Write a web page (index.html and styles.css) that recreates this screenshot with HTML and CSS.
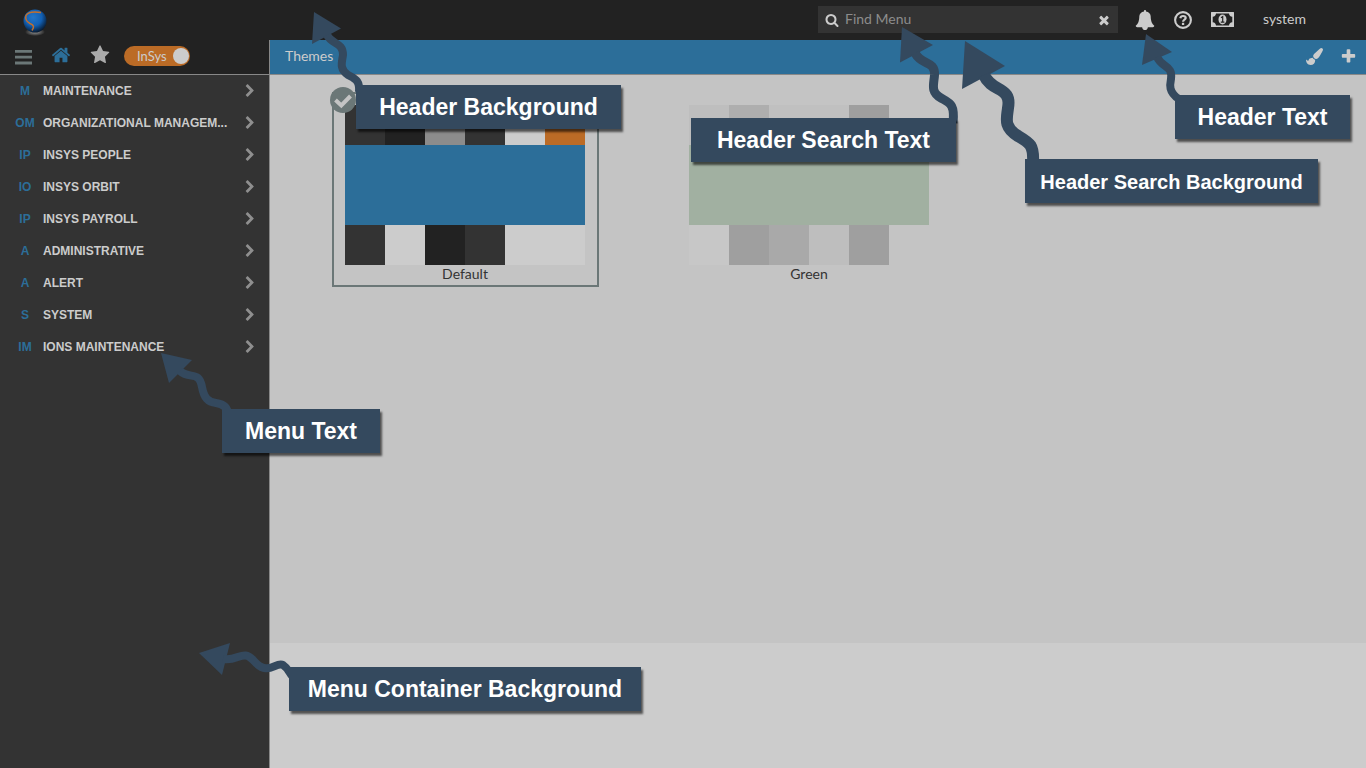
FILE: index.html
```html
<!DOCTYPE html>
<html lang="en">
<head>
<meta charset="utf-8">
<meta name="viewport" content="width=device-width, initial-scale=1">
<title>Themes</title>
<link rel="stylesheet" href="styles.css">
</head>
<body>
<svg class="defs" aria-hidden="true">
  <symbol id="chevron" viewBox="0 0 1792 1792"><path d="M1363 877l-742 742q-19 19-45 19t-45-19l-166-166q-19-19-19-45t19-45l531-531-531-531q-19-19-19-45t19-45l166-166q19-19 45-19t45 19l742 742q19 19 19 45t-19 45z"/></symbol>
</svg>
<div class="app">
  <header class="topbar">
    <a class="logo" href="#" aria-label="Home page">
      <svg width="26" height="28" viewBox="0 0 26 28">
        <defs>
          <radialGradient id="ball" cx="42%" cy="34%" r="68%">
            <stop offset="0" stop-color="#2476c8"/><stop offset=".55" stop-color="#1260b4"/><stop offset="1" stop-color="#08182c"/>
          </radialGradient>
          <radialGradient id="shade"><stop offset=".3" stop-color="#777"/><stop offset="1" stop-color="#222"/></radialGradient>
        </defs>
        <ellipse cx="13" cy="23" rx="10" ry="4" fill="url(#shade)"/>
        <circle cx="13" cy="12" r="11.500" fill="url(#ball)"/>
        <path d="M19 3.500C13 2.500 6 3 4 6.500C3 10.500 5 13 8 14.500C12 16 12.500 18 10 21.500" fill="none" stroke="#c4702c" stroke-width="1.500"/>
      </svg>
    </a>
    <form class="search" role="search">
      <svg class="search-icon" width="14" height="14" viewBox="0 0 1792 1792"><path d="M1216 832q0-185-131.500-316.500t-316.500-131.500-316.500 131.500-131.500 316.500 131.500 316.500 316.500 131.500 316.500-131.500 131.500-316.500zm512 832q0 52-38 90t-90 38q-54 0-90-38l-343-342q-179 124-399 124-143 0-273.500-55.500t-225-150-150-225-55.500-273.500 55.500-273.500 150-225 225-150 273.500-55.500 273.500 55.500 225 150 150 225 55.500 273.500q0 220-124 399l343 343q37 37 37 90z"/></svg>
      <input type="text" placeholder="Find Menu" aria-label="Find Menu">
      <button type="button" aria-label="Clear"><svg width="14" height="14" viewBox="0 0 1792 1792"><path d="M1490 1322q0 40-28 68l-136 136q-28 28-68 28t-68-28l-294-294-294 294q-28 28-68 28t-68-28l-136-136q-28-28-28-68t28-68l294-294-294-294q-28-28-28-68t28-68l136-136q28-28 68-28t68 28l294 294 294-294q28-28 68-28t68 28l136 136q28 28 28 68t-28 68l-294 294 294 294q28 28 28 68z"/></svg></button>
    </form>
    <nav class="actions" aria-label="Account">
      <button type="button" aria-label="Alerts"><svg width="20" height="20" viewBox="0 0 1792 1792"><path d="M1728 1408q0 52-38 90t-90 38h-448q0 106-75 181t-181 75-181-75-75-181h-448q-52 0-90-38t-38-90q50-42 91-88t85-119.500 74.500-158.500 50-206 19.500-260q0-152 117-282.500t307-158.500q-8-19-8-39 0-40 28-68t68-28 68 28 28 68q0 20-8 39 190 28 307 158.500t117 282.500q0 139 19.500 260t50 206 74.500 158.500 85 119.500 91 88z"/></svg></button>
      <button type="button" aria-label="Help"><svg width="18" height="18" viewBox="0 0 18 18"><circle cx="9" cy="9" r="7.900" fill="none" stroke="currentColor" stroke-width="2.100"/><path d="M6.300 7.200C6.600 5.600 7.700 5 9 5C10.500 5 11.700 5.900 11.700 7.100C11.700 8.700 9.100 8.700 9.100 10.700" fill="none" stroke="currentColor" stroke-width="2.200"/><path d="M7.900 11.800h2.300v2.200h-2.300z"/></svg></button>
      <button type="button" aria-label="Payments"><svg width="23" height="15" viewBox="0 0 23 15"><path fill-rule="evenodd" d="M.5 0h22q.5 0 .5.500v14q0 .5-.5.500h-22q-.5 0-.5-.5v-14q0-.5.500-.5zM5 1.600Q4.700 4.500 1.700 4.800V10.200Q4.700 10.500 5 13.400H18Q18.300 10.500 21.300 10.200V4.800Q18.300 4.500 18 1.600z"/><ellipse cx="11.500" cy="7.500" rx="4" ry="4.900"/><path d="M10 5.800L11.700 4.600V10M9.800 10.200H13.400" fill="none" stroke="#222" stroke-width="1.200"/></svg></button>
      <a class="user" href="#">system</a>
    </nav>
  </header>
  <div class="body">
    <aside class="sidebar">
      <div class="tools">
        <button type="button" class="bars" aria-label="Toggle menu"><svg width="18" height="15" viewBox="0 0 18 15"><path d="M1 0h17v2.800h-17zM1 5.800h17v2.800h-17zM1 11.600h17v2.800h-17z"/></svg></button>
        <button type="button" class="home" aria-label="Home"><svg width="20" height="20" viewBox="0 0 1792 1792"><path d="M1472 992v480q0 26-19 45t-45 19h-384v-384h-256v384h-384q-26 0-45-19t-19-45v-480q0-1 .5-3t.5-3l575-474 575 474q1 2 1 6zm223-69l-62 74q-8 9-21 11h-3q-13 0-21-7l-692-577-692 577q-12 8-24 7-13-2-21-11l-62-74q-8-10-7-23.500t11-21.500l719-599q32-26 76-26t76 26l244 204v-195q0-14 9-23t23-9h192q14 0 23 9t9 23v408l219 182q10 8 11 21.500t-7 23.500z"/></svg></button>
        <button type="button" class="star" aria-label="Favorites"><svg width="20" height="20" viewBox="0 0 1792 1792"><path d="M1728 647q0 22-26 48l-363 354 86 500q1 7 1 20 0 21-10.500 35.500t-30.500 14.500q-19 0-40-12l-449-236-449 236q-22 12-40 12-21 0-31.500-14.500t-10.500-35.500q0-6 2-20l86-500-364-354q-25-27-25-48 0-37 56-46l502-73 225-455q19-41 49-41t49 41l225 455 502 73q56 9 56 46z"/></svg></button>
        <label class="switch"><input type="checkbox" checked><span>InSys</span></label>
      </div>
      <ul class="menu">
        <li><a href="#"><b>M</b><span>MAINTENANCE</span><svg><use href="#chevron"/></svg></a></li>
        <li><a href="#"><b>OM</b><span>ORGANIZATIONAL MANAGEM...</span><svg><use href="#chevron"/></svg></a></li>
        <li><a href="#"><b>IP</b><span>INSYS PEOPLE</span><svg><use href="#chevron"/></svg></a></li>
        <li><a href="#"><b>IO</b><span>INSYS ORBIT</span><svg><use href="#chevron"/></svg></a></li>
        <li><a href="#"><b>IP</b><span>INSYS PAYROLL</span><svg><use href="#chevron"/></svg></a></li>
        <li><a href="#"><b>A</b><span>ADMINISTRATIVE</span><svg><use href="#chevron"/></svg></a></li>
        <li><a href="#"><b>A</b><span>ALERT</span><svg><use href="#chevron"/></svg></a></li>
        <li><a href="#"><b>S</b><span>SYSTEM</span><svg><use href="#chevron"/></svg></a></li>
        <li><a href="#"><b>IM</b><span>IONS MAINTENANCE</span><svg><use href="#chevron"/></svg></a></li>
      </ul>
    </aside>
    <main class="content">
      <div class="titlebar">
        <h1>Themes</h1>
        <button type="button" aria-label="Edit theme"><svg width="17" height="17" viewBox="0 0 1792 1792"><path d="M1615 0q70 0 122.500 46.500t52.500 116.500q0 63-45 151-332 629-465 752-97 91-218 91-126 0-216.500-92.500t-90.500-219.500q0-128 92-212l638-579q59-54 130-54zm-909 1034q39 76 106.500 130t150.500 76l1 71q4 213-129.500 347t-348.500 134q-123 0-218-46.500t-152.500-127.500-86.500-183-29-220q7 5 41 30t62 44.500 59 36.500 46 17q41 0 55-37 25-66 57.500-112.500t69.500-76 88-47.500 103-25.500 125-10.500z"/></svg></button>
        <button type="button" aria-label="Add theme"><svg width="17" height="17" viewBox="0 0 1792 1792"><path d="M1600 736v192q0 40-28 68t-68 28h-416v416q0 40-28 68t-68 28h-192q-40 0-68-28t-28-68v-416h-416q-40 0-68-28t-28-68v-192q0-40 28-68t68-28h416v-416q0-40 28-68t68-28h192q40 0 68 28t28 68v416h416q40 0 68 28t28 68z"/></svg></button>
      </div>
      <div class="themes">
        <figure class="theme selected">
          <svg class="check" width="26" height="26" viewBox="0 0 26 26"><circle cx="13" cy="13" r="13" fill="#6b7777"/><path d="M5.500 13L11.300 18.500L20.500 9" fill="none" stroke="#c4c4c4" stroke-width="4"/></svg>
          <div class="swatches">
            <i class="c33"></i><i class="c22"></i><i class="c8c"></i><i class="c33"></i><i class="ccc"></i><i class="orange"></i>
            <i class="wide blue"></i>
            <i class="c33"></i><i class="ccc"></i><i class="c22"></i><i class="c33"></i><i class="ccc"></i><i class="ccc"></i>
          </div>
          <figcaption>Default</figcaption>
        </figure>
        <figure class="theme">
          <div class="swatches">
            <i class="cbe"></i><i class="cae"></i><i class="cc0"></i><i class="cc0"></i><i class="c9f"></i><i></i>
            <i class="wide green"></i>
            <i class="cc7"></i><i class="c9f"></i><i class="ca9"></i><i class="cbe"></i><i class="c9f"></i><i></i>
          </div>
          <figcaption>Green</figcaption>
        </figure>
      </div>
    </main>
  </div>
  <div class="notes">
    <svg class="arrows" width="1366" height="768" viewBox="0 0 1366 768" aria-hidden="true">
      <g class="heads">
        <path d="M314 12L341 28.500L312 44z"/>
        <path d="M902 27L933 45L900 62.500z"/>
        <path d="M965 41L1005 66L962 89z"/>
        <path d="M1146 34L1172 52L1142 65z"/>
        <path d="M161 353L192 360L169 383z"/>
        <path d="M199 653L230 643L222 675z"/>
      </g>
      <g class="tails">
        <path stroke-width="8" d="M327 35C332 45 343 42 343 55C342 62 339 69 348 75C355 79 360 80 359 92"/>
        <path stroke-width="9" d="M915 53C922 66 935 60 934.500 75C934 84 930 92 941 98C950 103 955 104 953 123"/>
        <path stroke-width="12" d="M984 75C992 93 1012 86 1008 108C1007 118 1003 127 1018 136C1030 143 1034 145 1033 163"/>
        <path stroke-width="8" d="M1157 57C1162 68 1173 65 1171 79C1170 84 1168 92 1179 99"/>
        <path stroke-width="8" d="M180 371C190 380 199 370 202 387C204 398 208 402 216 403C223 404 228 407 228 415"/>
        <path stroke-width="8" d="M223 659C238 662 243 648 254 661C268 677 276 661 283 665C289 669 289 673 293 677"/>
      </g>
    </svg>
    <div class="note n1">Header Background</div>
    <div class="note n2">Header Search Text</div>
    <div class="note n3">Header Text</div>
    <div class="note small n4">Header Search Background</div>
    <div class="note n5">Menu Text</div>
    <div class="note n6">Menu Container Background</div>
  </div>
</div>
</body>
</html>
```
FILE: styles.css
```css
* { box-sizing: border-box; }
body {
  margin: 0;
  font: 14px/20px Lato, "Open Sans", sans-serif;
  color: #333;
  background: #ccc;
}
svg { display: block; fill: currentColor; }
button {
  padding: 0;
  border: 0;
  background: none;
  color: inherit;
}
a { color: inherit; text-decoration: none; }
.defs { position: absolute; width: 0; height: 0; }
.app {
  position: relative;
  display: flex;
  flex-direction: column;
  min-height: 100vh;
}

.topbar {
  display: flex;
  align-items: center;
  height: 40px;
  padding: 0 60px 1px 22px;
  background: #222;
  color: #ccc;
}
.logo { padding-top: 6px; }
.search {
  display: flex;
  align-items: center;
  width: 300px;
  height: 27px;
  margin: 0 17px 0 auto;
  padding: 0 7px;
  background: #333;
}
.search input {
  flex: 1;
  min-width: 0;
  padding: 0 6px 2px;
  border: 0;
  outline: 0;
  background: none;
  color: #ccc;
  font: inherit;
}
.search input::placeholder { color: #8c8c8c; opacity: 1; }
.actions { display: flex; align-items: center; gap: 19px; }
.user { padding: 0 0 2px 10px; }

.body { display: flex; flex: 1; }
.sidebar {
  flex: none;
  width: 270px;
  background: #333;
  border-right: 1px solid #888;
}
.tools {
  display: flex;
  align-items: center;
  height: 35px;
  padding: 0 14px 2px;
  background: #222;
  border-bottom: 1px solid #888;
}
.bars { padding-top: 2px; color: #6b7777; }
.home { margin-left: 19px; padding-bottom: 2px; color: #2c6e99; }
.star { margin: 0 14px 0 19px; padding-bottom: 2px; color: #aaa; }
.switch {
  display: flex;
  align-items: center;
  flex-direction: row-reverse;
  gap: 6px;
  height: 20px;
  padding: 0 1px 0 13px;
  border-radius: 10px;
  background: #bb6b26;
  color: #ccc;
  font-size: 13px;
}
.switch input {
  appearance: none;
  width: 16px;
  height: 16px;
  margin: 0;
  border-radius: 50%;
  background: #ccc;
}
.menu {
  margin: 0;
  padding: 0;
  list-style: none;
  font: 12px/32px "Liberation Sans", Arial, sans-serif;
}
.menu a {
  display: flex;
  align-items: center;
  height: 32px;
  padding: 0 12px 0 10px;
  color: #ccc;
}
.menu b { width: 30px; text-align: center; color: #2c6e99; }
.menu span {
  flex: 1;
  min-width: 0;
  margin: 0 0 0 3px;
  white-space: nowrap;
  font-weight: bold;
}
.menu svg { width: 14px; height: 14px; color: #8f8f8f; }

.content {
  flex: 1;
  display: flex;
  flex-direction: column;
  min-width: 0;
  padding-bottom: 125px;
}
.titlebar {
  display: flex;
  align-items: center;
  gap: 17px;
  height: 35px;
  padding: 0 9px 2px 15px;
  background: #2c6e99;
  border-bottom: 1px solid #888;
  color: #ccc;
}
.titlebar h1 { flex: 1; margin: 0; font: inherit; }
.themes {
  flex: 1;
  display: flex;
  align-items: flex-start;
  gap: 77px;
  padding: 17px 62px;
  background: #c4c4c4;
}
.theme {
  position: relative;
  width: 267px;
  margin: 0;
  padding: 11px 12px 2px 11px;
  border: 2px solid transparent;
  text-align: center;
}
.selected { border-color: #6b7777; }
.check { position: absolute; left: -4px; top: -7px; }
.swatches {
  display: grid;
  grid-template-columns: repeat(6, 40px);
  grid-template-rows: 40px 80px 40px;
}
.wide { grid-column: 1 / -1; }
.theme figcaption { line-height: 18px; }
.c22 { background: #222; }
.c33 { background: #333; }
.c8c { background: #8c8c8c; }
.c9f { background: #9f9f9f; }
.ca9 { background: #a9a9a9; }
.cae { background: #aeaeae; }
.cbe { background: #bebebe; }
.cc0 { background: #c0c0c0; }
.cc7 { background: #c7c7c7; }
.ccc { background: #ccc; }
.orange { background: #bb6b26; }
.blue { background: #2c6e99; }
.green { background: #a1b0a1; }

.notes { position: absolute; left: 0; top: 0; }
.heads { fill: #34495e; }
.tails { fill: none; stroke: #34495e; }
.note {
  position: absolute;
  height: 44px;
  background: #34495e;
  box-shadow: 2px 3px 2px rgba(0, 0, 0, 0.6);
  color: #fff;
  font: bold 23px/44px "Liberation Sans", Arial, sans-serif;
  text-align: center;
  white-space: nowrap;
}
.small { font-size: 20px; line-height: 46px; }
.n1 { left: 356px; top: 85px; width: 265px; }
.n2 { left: 691px; top: 118px; width: 265px; }
.n3 { left: 1175px; top: 95px; width: 175px; }
.n4 { left: 1025px; top: 159px; width: 293px; }
.n5 { left: 222px; top: 409px; width: 158px; }
.n6 { left: 289px; top: 667px; width: 352px; }
```
